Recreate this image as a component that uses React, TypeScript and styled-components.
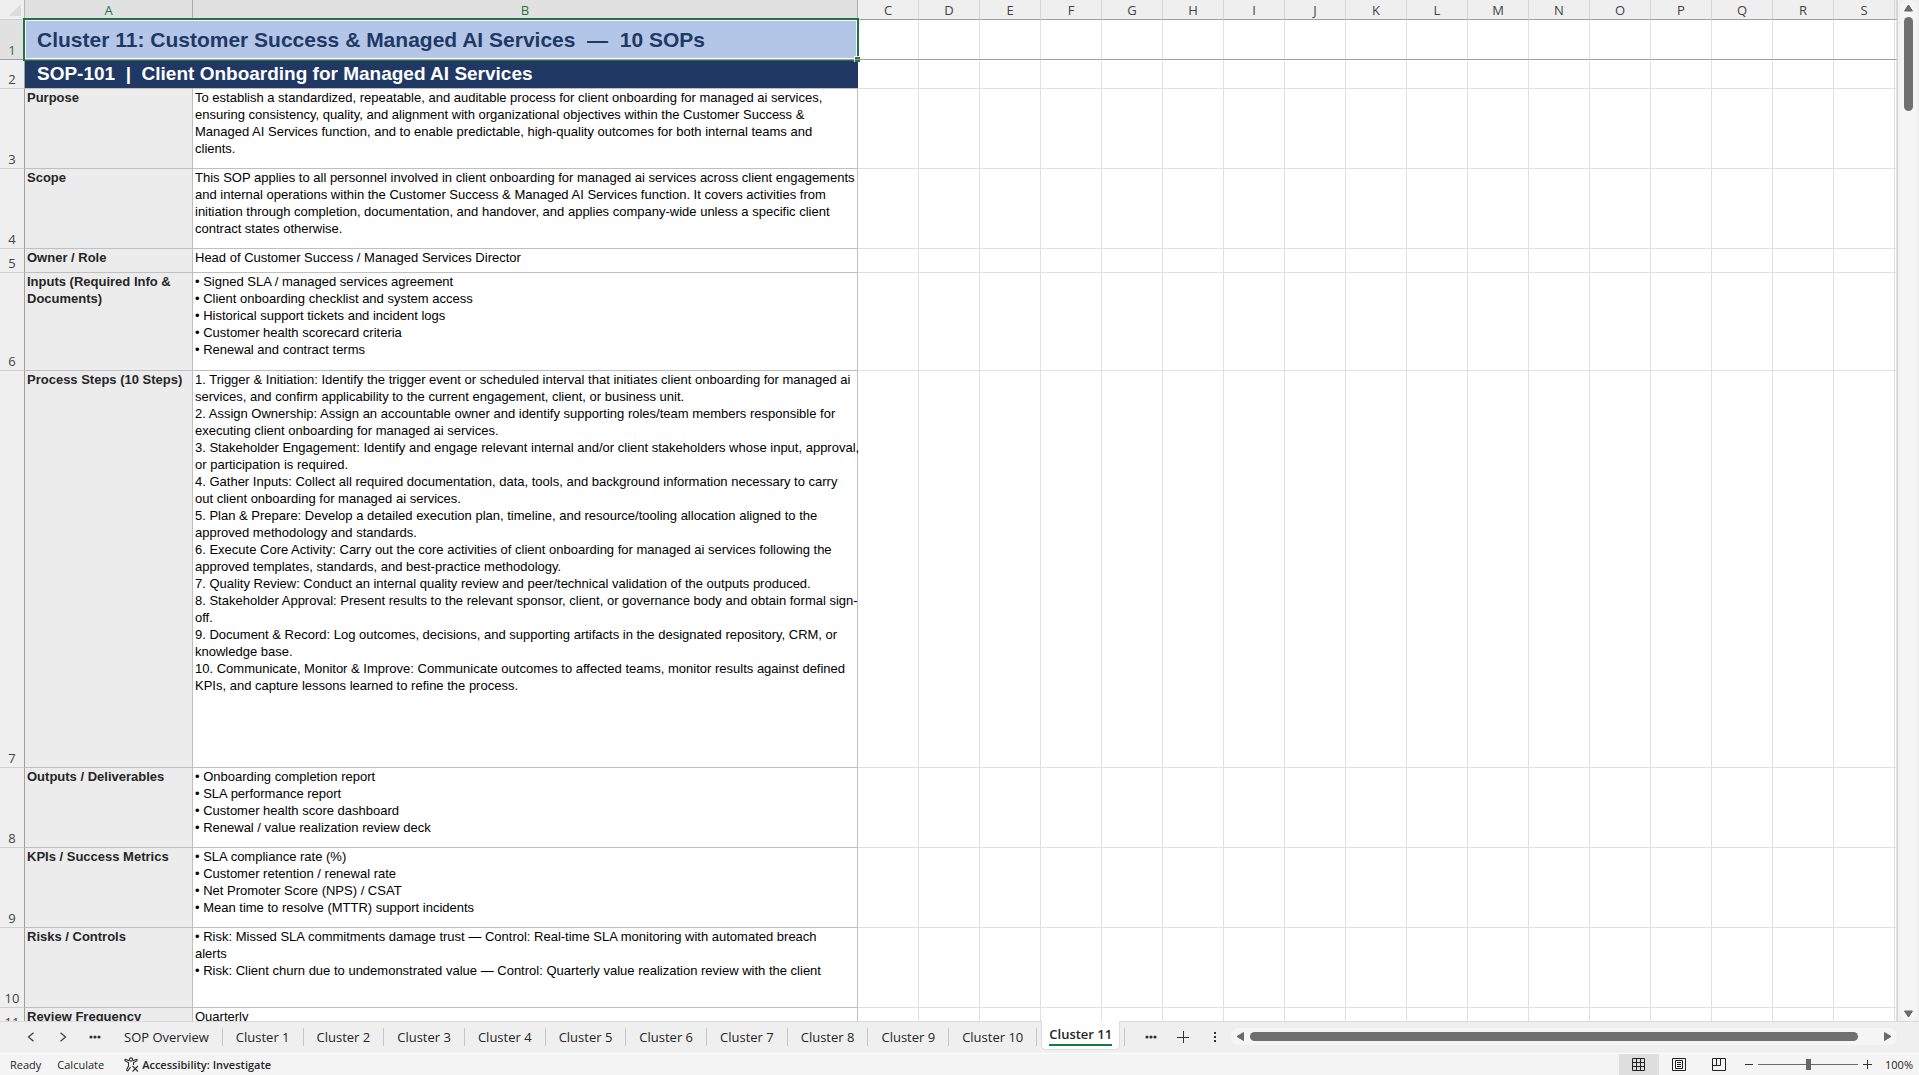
import React from "react";
import styled, { createGlobalStyle, css } from "styled-components";

const ui = `"Open Sans", "Noto Sans", sans-serif`;
const arial = `"Liberation Sans", Arial, sans-serif`;

const Global = createGlobalStyle`
  * { box-sizing: border-box; }
  body { margin: 0; background: #efefef; overflow: hidden; }
  button { font: inherit; color: inherit; background: none; border: 0; padding: 0; margin: 0; }
  svg { display: block; flex: none; }
`;

const Page = styled.div`
  display: flex;
  flex-direction: column;
  height: 100vh;
  font-family: ${ui};
  color: #252525;
`;

const Workspace = styled.main`
  flex: 1;
  min-height: 0;
  display: flex;
`;

const SheetArea = styled.section`
  flex: 1;
  min-width: 0;
  overflow: hidden;
  background: #fff;
  border-right: 1px solid #d9d9d9;
`;

const Grid = styled.table`
  width: 100%;
  table-layout: fixed;
  border-collapse: separate;
  border-spacing: 0;
`;

const Col = styled.col<{ $w?: number }>`
  ${(p) => p.$w && `width: ${p.$w}px;`}
`;

const HeadCell = styled.th<{ $active?: boolean }>`
  height: 20px;
  padding: 0;
  font: 400 13px/18px ${ui};
  color: ${(p) => (p.$active ? "#217346" : "#444")};
  background: ${(p) => (p.$active ? "#e1e1e1" : "#efefef")};
  border-bottom: 1px solid #9f9f9f;
  border-right: 1px solid ${(p) => (p.$active ? "#ababab" : "#d6d6d6")};
`;

const Corner = styled.td`
  height: 20px;
  padding: 0 3px 3px 0;
  vertical-align: bottom;
  background: #efefef;
  border-bottom: 1px solid #d0d0d0;
  border-right: 1px solid #b5b5b5;
  svg { margin-left: auto; }
`;

const RowHead = styled.th<{ $active?: boolean }>`
  padding: 0 0 1px;
  vertical-align: bottom;
  text-align: center;
  font: 400 13px/16px ${ui};
  color: ${(p) => (p.$active ? "#217346" : "#444")};
  background: ${(p) => (p.$active ? "#e1e1e1" : "#efefef")};
  border-bottom: 1px solid ${(p) => (p.$active ? "#9f9f9f" : "#d0d0d0")};
  border-right: 1px solid #9f9f9f;
`;

const Row = styled.tr<{ $h: number }>`
  height: ${(p) => p.$h}px;
`;

const Blank = styled.td<{ $frozen?: boolean }>`
  padding: 0;
  border-right: 1px solid #e0e0e0;
  border-bottom: 1px solid ${(p) => (p.$frozen ? "#9f9f9f" : "#e0e0e0")};
`;

const cell = css`
  padding: 0 0 0 2px;
  vertical-align: top;
  text-align: left;
  border-right: 1px solid #bfbfbf;
  border-bottom: 1px solid #bfbfbf;
  white-space: pre;
`;

const LabelCell = styled.td`
  ${cell}
  font: 700 13px/17px ${arial};
  color: #262626;
  background: #ececec;
`;

const TextCell = styled.td`
  ${cell}
  font: 400 13px/17px ${arial};
  color: #000;
`;

const TitleCell = styled.td`
  position: relative;
  padding: 0 12px;
  background: #b4c6e7;
  border-bottom: 1px solid #9f9f9f;
  font: 700 21px/24px ${arial};
  color: #1f3864;
  white-space: pre;
`;

const Selection = styled.span`
  position: absolute;
  inset: -2px -1px -2px -2px;
  border: 2px solid #217346;
  border-bottom-width: 1px;
  box-shadow: inset 0 -1px 0 #9f9f9f, inset 0 0 0 1px #fff, inset 0 -2px 0 #fff;
  pointer-events: none;
`;

const FillHandle = styled.span`
  position: absolute;
  right: -2px;
  bottom: -3px;
  width: 6px;
  height: 6px;
  background: linear-gradient(#9f9f9f, #9f9f9f) 0 2px / 100% 1px no-repeat #217346;
  border-left: 1px solid #fff;
  border-top: 1px solid #fff;
`;

const SopCell = styled.td`
  padding: 0 12px;
  background: #203864;
  border-bottom: 1px solid #bfbfbf;
  font: 700 19px/24px ${arial};
  color: #fff;
  white-space: pre;
`;

const VScroll = styled.aside`
  width: 21px;
  padding: 0 2px;
  display: flex;
`;

const VTrack = styled.div`
  flex: 1;
  display: flex;
  flex-direction: column;
  align-items: center;
  gap: 4px;
  padding: 4px 0 2px;
  border-radius: 8px;
  background: #f5f5f5;
`;

const VThumb = styled.div`
  width: 9px;
  height: 94px;
  border-radius: 5px;
  background: #707070;
`;

const Fill = styled.div`
  flex: 1;
`;

const TabBar = styled.nav`
  height: 32px;
  display: flex;
  align-items: flex-start;
  background: #efefef;
  border-bottom: 1px solid #fff;
`;

const Rule = styled.div`
  height: 1px;
  background: #d9d9d9;
  flex: none;
`;

const NavButtons = styled.div`
  display: flex;
  width: 111px;
  padding-left: 15px;
`;

const IconButton = styled.button`
  width: 32px;
  height: 30px;
  display: flex;
  align-items: center;
  justify-content: center;
`;

const TabButton = styled.button`
  position: relative;
  height: 31px;
  padding: 0 14px 0 13px;
  font-size: 13px;
  line-height: 31px;
  white-space: nowrap;
  &::after {
    content: "";
    position: absolute;
    right: 0;
    top: 6px;
    height: 18px;
    width: 1px;
    background: #c6c6c6;
  }
`;

const ActiveTab = styled.button`
  height: 29px;
  margin: -1px 4px 0;
  padding: 5px 7px 3px;
  background: #fff;
  border: 1px solid #dcdcdc;
  border-top: 0;
  border-radius: 0 0 5px 5px;
  font-size: 13px;
  font-weight: 600;
  white-space: nowrap;
  display: flex;
`;

const ActiveLabel = styled.span`
  line-height: 17px;
  height: 20px;
  border-bottom: 2px solid #107c41;
`;

const TabTools = styled.div`
  display: flex;
  padding-left: 10px;
  border-left: 1px solid #c6c6c6;
  height: 18px;
  margin-top: 6px;
  align-items: center;
`;

const HScroll = styled.div`
  flex: 1;
  height: 17px;
  margin: 6px 22px 0 0;
  display: flex;
  align-items: center;
  gap: 5px;
  padding: 0 5px;
  border-radius: 8px;
  background: #f5f5f5;
`;

const HThumb = styled.div`
  flex: 1;
  height: 9px;
  margin-right: 20px;
  border-radius: 5px;
  background: #707070;
`;

const StatusBar = styled.footer`
  height: 21px;
  display: flex;
  background: #f4f4f4;
  font-size: 11px;
  line-height: 21px;
`;

const StatusInfo = styled.div`
  flex: 1;
  display: flex;
  gap: 16px;
  padding-left: 10px;
`;

const AccessButton = styled.button`
  display: flex;
  align-items: center;
  gap: 3px;
  margin-left: 4px;
  font-weight: 600;
`;

const ViewButton = styled.button<{ $on?: boolean }>`
  width: 40px;
  height: 21px;
  display: flex;
  align-items: center;
  justify-content: center;
  background: ${(p) => (p.$on ? "#dedede" : "transparent")};
`;

const Zoom = styled.div`
  display: flex;
  align-items: center;
  padding: 0 6px 0 3px;
`;

const ZoomButton = styled.button`
  width: 14px;
  height: 21px;
  display: flex;
  align-items: center;
  justify-content: center;
`;

const Slider = styled.input`
  appearance: none;
  width: 100px;
  height: 12px;
  margin: 0 2px;
  background: linear-gradient(#6b6b6b, #6b6b6b) center / 100% 1px no-repeat;
  &::-webkit-slider-thumb {
    appearance: none;
    width: 5px;
    height: 11px;
    background: #666;
  }
`;

const ZoomValue = styled.button`
  margin-left: 11px;
  width: 28px;
  white-space: nowrap;
`;

const letters = "CDEFGHIJKLMNOPQRS".split("");

const rows = [
  { n: 3, h: 80, label: "Purpose", text: ["To establish a standardized, repeatable, and auditable process for client onboarding for managed ai services,", "ensuring consistency, quality, and alignment with organizational objectives within the Customer Success &", "Managed AI Services function, and to enable predictable, high-quality outcomes for both internal teams and", "clients."] },
  { n: 4, h: 80, label: "Scope", text: ["This SOP applies to all personnel involved in client onboarding for managed ai services across client engagements", "and internal operations within the Customer Success & Managed AI Services function. It covers activities from", "initiation through completion, documentation, and handover, and applies company-wide unless a specific client", "contract states otherwise."] },
  { n: 5, h: 24, label: "Owner / Role", text: ["Head of Customer Success / Managed Services Director"] },
  { n: 6, h: 98, label: "Inputs (Required Info &\nDocuments)", text: ["• Signed SLA / managed services agreement", "• Client onboarding checklist and system access", "• Historical support tickets and incident logs", "• Customer health scorecard criteria", "• Renewal and contract terms"] },
  { n: 7, h: 397, label: "Process Steps (10 Steps)", text: [
    "1. Trigger & Initiation: Identify the trigger event or scheduled interval that initiates client onboarding for managed ai",
    "services, and confirm applicability to the current engagement, client, or business unit.",
    "2. Assign Ownership: Assign an accountable owner and identify supporting roles/team members responsible for",
    "executing client onboarding for managed ai services.",
    "3. Stakeholder Engagement: Identify and engage relevant internal and/or client stakeholders whose input, approval,",
    "or participation is required.",
    "4. Gather Inputs: Collect all required documentation, data, tools, and background information necessary to carry",
    "out client onboarding for managed ai services.",
    "5. Plan & Prepare: Develop a detailed execution plan, timeline, and resource/tooling allocation aligned to the",
    "approved methodology and standards.",
    "6. Execute Core Activity: Carry out the core activities of client onboarding for managed ai services following the",
    "approved templates, standards, and best-practice methodology.",
    "7. Quality Review: Conduct an internal quality review and peer/technical validation of the outputs produced.",
    "8. Stakeholder Approval: Present results to the relevant sponsor, client, or governance body and obtain formal sign-",
    "off.",
    "9. Document & Record: Log outcomes, decisions, and supporting artifacts in the designated repository, CRM, or",
    "knowledge base.",
    "10. Communicate, Monitor & Improve: Communicate outcomes to affected teams, monitor results against defined",
    "KPIs, and capture lessons learned to refine the process.",
  ] },
  { n: 8, h: 80, label: "Outputs / Deliverables", text: ["• Onboarding completion report", "• SLA performance report", "• Customer health score dashboard", "• Renewal / value realization review deck"] },
  { n: 9, h: 80, label: "KPIs / Success Metrics", text: ["• SLA compliance rate (%)", "• Customer retention / renewal rate", "• Net Promoter Score (NPS) / CSAT", "• Mean time to resolve (MTTR) support incidents"] },
  { n: 10, h: 80, label: "Risks / Controls", text: ["• Risk: Missed SLA commitments damage trust — Control: Real-time SLA monitoring with automated breach", "alerts", "• Risk: Client churn due to undemonstrated value — Control: Quarterly value realization review with the client"] },
  { n: 11, h: 24, label: "Review Frequency", text: ["Quarterly"] },
];

const tabs = ["SOP Overview", ...Array.from({ length: 10 }, (_, i) => `Cluster ${i + 1}`)];

const Blanks = ({ frozen }: { frozen?: boolean }) => (
  <>
    {letters.map((l) => <Blank key={l} $frozen={frozen} />)}
    <Blank $frozen={frozen} />
  </>
);

const Triangle = ({ dir }: { dir: "up" | "down" | "left" | "right" }) => {
  const d = {
    up: "M4.5 1 8.5 7H.5Z",
    down: "M.5 1h8L4.5 7Z",
    left: "M7.5 .5v8L1 4.5Z",
    right: "M1.500 .5v8L8 4.5Z",
  }[dir];
  return <svg width="9" height="9"><path d={d} fill="#6a6a6a" stroke="#6a6a6a" strokeLinejoin="round" /></svg>;
};

const Dots = () => (
  <svg width="12" height="4" fill="#333"><circle cx="2" cy="2" r="1.6" /><circle cx="6" cy="2" r="1.6" /><circle cx="10" cy="2" r="1.6" /></svg>
);

export default function App() {
  return (
    <Page>
      <Global />
      <Workspace>
        <SheetArea>
          <Grid>
            <colgroup>
              <Col $w={25} />
              <Col $w={168} />
              <Col $w={665} />
              {letters.map((l) => <Col key={l} $w={61} />)}
              <Col />
            </colgroup>
            <thead>
              <tr>
                <Corner><svg width="12" height="12"><path d="M12 0v12H0Z" fill="#dcdcdc" /></svg></Corner>
                <HeadCell $active>A</HeadCell>
                <HeadCell $active>B</HeadCell>
                {letters.map((l) => <HeadCell key={l}>{l}</HeadCell>)}
                <HeadCell />
              </tr>
            </thead>
            <tbody>
              <Row $h={40}>
                <RowHead $active>1</RowHead>
                <TitleCell colSpan={2}>
                  {"Cluster 11: Customer Success & Managed AI Services  —  10 SOPs"}
                  <Selection />
                  <FillHandle />
                </TitleCell>
                <Blanks frozen />
              </Row>
              <Row $h={29}>
                <RowHead>2</RowHead>
                <SopCell colSpan={2}>{"SOP-101  |  Client Onboarding for Managed AI Services"}</SopCell>
                <Blanks />
              </Row>
              {rows.map((r) => (
                <Row key={r.n} $h={r.h}>
                  <RowHead>{r.n}</RowHead>
                  <LabelCell>{r.label}</LabelCell>
                  <TextCell>{r.text.join("\n")}</TextCell>
                  <Blanks />
                </Row>
              ))}
            </tbody>
          </Grid>
        </SheetArea>
        <VScroll>
          <VTrack>
            <Triangle dir="up" />
            <VThumb />
            <Fill />
            <Triangle dir="down" />
          </VTrack>
        </VScroll>
      </Workspace>
      <Rule />
      <TabBar>
        <NavButtons>
          <IconButton aria-label="Previous sheet"><svg width="8" height="10" fill="none" stroke="#444" strokeWidth="1.3"><path d="M6.500 .8 1.500 5l5 4.200" /></svg></IconButton>
          <IconButton aria-label="Next sheet"><svg width="8" height="10" fill="none" stroke="#444" strokeWidth="1.3"><path d="M1.500 .8 6.500 5l-5 4.200" /></svg></IconButton>
          <IconButton aria-label="More sheets"><Dots /></IconButton>
        </NavButtons>
        {tabs.map((t) => <TabButton key={t}>{t}</TabButton>)}
        <ActiveTab><ActiveLabel>Cluster 11</ActiveLabel></ActiveTab>
        <TabTools>
          <IconButton aria-label="More tabs"><Dots /></IconButton>
          <IconButton aria-label="New sheet"><svg width="12" height="12" stroke="#333"><path d="M0 6.500H12M6.500 0V12" /></svg></IconButton>
          <IconButton aria-label="Resize tabs"><svg width="3" height="11" fill="#333"><path d="M0 0h2v2H0zM0 4h2v2H0zM0 8h2v2H0z" /></svg></IconButton>
        </TabTools>
        <HScroll>
          <Triangle dir="left" />
          <HThumb />
          <Triangle dir="right" />
        </HScroll>
      </TabBar>
      <StatusBar>
        <StatusInfo>
          <span>Ready</span>
          <span>Calculate</span>
          <AccessButton>
            <svg width="15" height="15" fill="none" stroke="#333" strokeWidth="1.100"><circle cx="7" cy="2.500" r="1.600" /><path d="M5.200 3.800 2 2.400C.8 2 .4 3.600 1.400 4L4.500 5.500V9L2.800 12.500c-.4 1.200 1 1.800 1.600.8L6.500 10M8.800 3.800 12 2.400c1.200-.4 1.600 1.200.6 1.600L9.500 5.500V8M8.500 9l5.500 5.500M14 9l-5.500 5.500" /></svg>
            Accessibility: Investigate
          </AccessButton>
        </StatusInfo>
        <ViewButton $on aria-label="Normal view"><svg width="14" height="14" fill="none" stroke="#222"><path d="M.5 .5h12v12H.5zM4.500 .5v12M8.500 .5v12M.5 4.500h12M.5 8.500h12" /></svg></ViewButton>
        <ViewButton aria-label="Page layout"><svg width="14" height="14" fill="none" stroke="#222"><path d="M.5 .5h13v12H.5zM3.500 2.500h7v8h-7zM5 4.500h4M5 6.500h4M5 8.500h4" /></svg></ViewButton>
        <ViewButton aria-label="Page break preview"><svg width="14" height="14" fill="none" stroke="#222"><path d="M.5 .5h13v12H.5zM.5 7.500h8v-7M4.500 .5v7" /></svg></ViewButton>
        <Zoom>
          <ZoomButton aria-label="Zoom out"><svg width="8" height="9" stroke="#333"><path d="M0 4.500h8" /></svg></ZoomButton>
          <Slider type="range" min="0" max="100" defaultValue="50" aria-label="Zoom" />
          <ZoomButton aria-label="Zoom in"><svg width="9" height="9" stroke="#333"><path d="M0 4.500h9M4.500 0v9" /></svg></ZoomButton>
          <ZoomValue>100%</ZoomValue>
        </Zoom>
      </StatusBar>
    </Page>
  );
}
